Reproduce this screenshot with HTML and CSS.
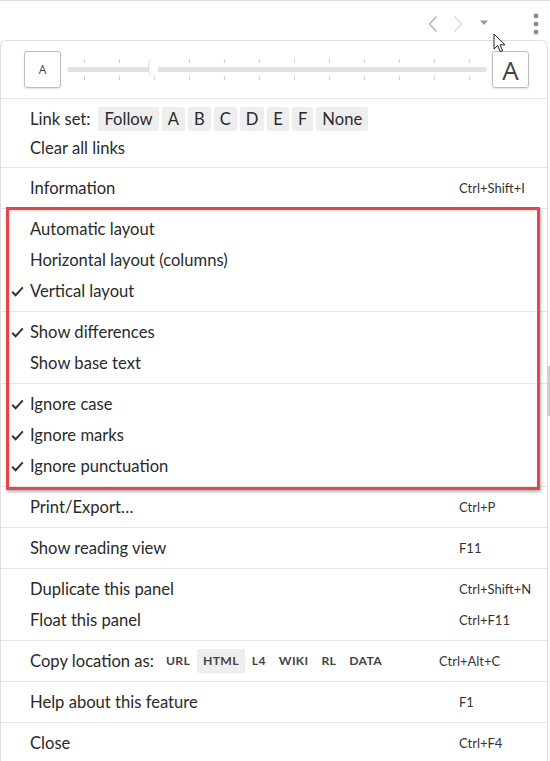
FILE: index.html
```html
<!DOCTYPE html>
<html lang="en">
<head>
<meta charset="utf-8">
<title>Menu</title>
<link rel="stylesheet" href="styles.css">
</head>
<body>
<div class="topbar">
  <span class="icon ic-prev"><svg width="12" height="18" viewBox="0 0 12 18"><path d="M9.5 1.5 L2.5 9 L9.5 16.5" fill="none" stroke="#b9b9b9" stroke-width="1.6"/></svg></span>
  <span class="icon ic-next"><svg width="12" height="18" viewBox="0 0 12 18"><path d="M2.5 1.5 L9.5 9 L2.5 16.5" fill="none" stroke="#dcdcdc" stroke-width="1.6"/></svg></span>
  <span class="icon ic-caret"><svg width="10" height="6" viewBox="0 0 10 6"><path d="M1 0.5 H9 L5 5 Z" fill="#9a9a9a"/></svg></span>
  <span class="icon ic-kebab"><svg width="6" height="22" viewBox="0 0 6 22"><circle cx="3" cy="3" r="2.4" fill="#8a8a8a"/><circle cx="3" cy="11" r="2.4" fill="#8a8a8a"/><circle cx="3" cy="19" r="2.4" fill="#8a8a8a"/></svg></span>
</div>

<div class="menu">
  <div class="slider-sec">
    <div class="abox abox-sm">A</div>
    <div class="slider">
      <div class="ticks"></div>
      <div class="track"></div>
      <div class="ticks"></div>
      <span class="thumb"></span>
    </div>
    <div class="abox abox-lg">A</div>
  </div>

  <div class="group">
    <div class="linkrow">
      <span class="lbl">Link set:</span>
      <span class="lbtn">Follow</span><span class="lbtn">A</span><span class="lbtn">B</span><span class="lbtn">C</span><span class="lbtn">D</span><span class="lbtn">E</span><span class="lbtn">F</span><span class="lbtn">None</span>
    </div>
    <div class="item item-clear"><span></span><span>Clear all links</span><span></span></div>
  </div>

  <div class="group">
    <div class="item"><span></span><span>Information</span><span class="sc">Ctrl+Shift+I</span></div>
  </div>

  <div class="group">
    <div class="item"><span></span><span>Automatic layout</span><span></span></div>
    <div class="item"><span></span><span>Horizontal layout (columns)</span><span></span></div>
    <div class="item"><span class="chk"><svg width="13" height="11" viewBox="0 0 13 11"><path d="M1.2 5.8 L4.6 9.2 L11.8 1.4" fill="none" stroke="#333" stroke-width="2"/></svg></span><span>Vertical layout</span><span></span></div>
  </div>

  <div class="group">
    <div class="item"><span class="chk"><svg width="13" height="11" viewBox="0 0 13 11"><path d="M1.2 5.8 L4.6 9.2 L11.8 1.4" fill="none" stroke="#333" stroke-width="2"/></svg></span><span>Show differences</span><span></span></div>
    <div class="item"><span></span><span>Show base text</span><span></span></div>
  </div>

  <div class="group">
    <div class="item"><span class="chk"><svg width="13" height="11" viewBox="0 0 13 11"><path d="M1.2 5.8 L4.6 9.2 L11.8 1.4" fill="none" stroke="#333" stroke-width="2"/></svg></span><span>Ignore case</span><span></span></div>
    <div class="item"><span class="chk"><svg width="13" height="11" viewBox="0 0 13 11"><path d="M1.2 5.8 L4.6 9.2 L11.8 1.4" fill="none" stroke="#333" stroke-width="2"/></svg></span><span>Ignore marks</span><span></span></div>
    <div class="item"><span class="chk"><svg width="13" height="11" viewBox="0 0 13 11"><path d="M1.2 5.8 L4.6 9.2 L11.8 1.4" fill="none" stroke="#333" stroke-width="2"/></svg></span><span>Ignore punctuation</span><span></span></div>
  </div>

  <div class="group">
    <div class="item"><span></span><span>Print/Export…</span><span class="sc">Ctrl+P</span></div>
  </div>

  <div class="group">
    <div class="item"><span></span><span>Show reading view</span><span class="sc">F11</span></div>
  </div>

  <div class="group">
    <div class="item"><span></span><span>Duplicate this panel</span><span class="sc">Ctrl+Shift+N</span></div>
    <div class="item"><span></span><span>Float this panel</span><span class="sc">Ctrl+F11</span></div>
  </div>

  <div class="group">
    <div class="item"><span></span><span class="copy"><span class="clbl">Copy location as:</span><span class="cbtn">URL</span><span class="cbtn on">HTML</span><span class="cbtn">L4</span><span class="cbtn">WIKI</span><span class="cbtn">RL</span><span class="cbtn">DATA</span></span><span class="sc sc-copy">Ctrl+Alt+C</span></div>
  </div>

  <div class="group">
    <div class="item"><span></span><span>Help about this feature</span><span class="sc">F1</span></div>
  </div>

  <div class="group">
    <div class="item"><span></span><span>Close</span><span class="sc">Ctrl+F4</span></div>
  </div>
</div>

<div class="highlight"></div>
<span class="scroll-thumb"></span>
<svg class="cursor" width="14" height="21" viewBox="0 0 14 21"><path d="M1 1 L1 16 L4.6 12.6 L7.2 18.6 L9.6 17.6 L7 11.8 L12 11.8 Z" fill="#fff" stroke="#222" stroke-width="1" stroke-linejoin="round"/></svg>
</body>
</html>
```

FILE: styles.css
```css
* { box-sizing: border-box; }

html, body {
  margin: 0;
  padding: 0;
  background: #fff;
}

body {
  position: relative;
  width: 550px;
  height: 761px;
  overflow: hidden;
  font-family: "Lato", "Open Sans", sans-serif;
  font-size: 16.6px;
  color: #2a2a2a;
}

.topbar {
  height: 40px;
  border-top: 1px solid #dcdcdc;
  padding-top: 7px;
  display: flex;
  align-items: center;
  justify-content: flex-end;
  padding-right: 4px;
}

.icon {
  display: flex;
  align-items: center;
  justify-content: center;
  width: 20px;
  height: 32px;
}

.ic-next { margin-left: 5px; }
.ic-caret { margin-left: 6px; }
.ic-caret svg { margin-top: -2px; }
.ic-kebab { margin-left: 32px; }

.menu {
  width: 548px;
  border: 1px solid #dedede;
  border-bottom: none;
  border-radius: 6px 6px 0 0;
}

.slider-sec {
  height: 57px;
  display: flex;
  align-items: center;
  padding: 0 18px 0 23px;
}

.abox {
  border: 1px solid #bdbdbd;
  border-radius: 3px;
  box-shadow: 0 1px 2px rgba(0, 0, 0, 0.12);
  display: flex;
  align-items: center;
  justify-content: center;
  color: #444;
  font-family: "Open Sans", sans-serif;
  flex: none;
}

.abox-sm {
  width: 37px;
  height: 37px;
  font-size: 12px;
}

.abox-lg {
  width: 37px;
  height: 37px;
  font-size: 26px;
  line-height: 1;
}

.slider {
  position: relative;
  flex: 1;
  margin: 0 5px 0 6px;
  display: flex;
  flex-direction: column;
  gap: 4px;
}

.ticks {
  height: 4px;
  background-image: linear-gradient(to right, transparent calc(50% - 0.5px), #cfcfcf calc(50% - 0.5px), #cfcfcf calc(50% + 0.5px), transparent calc(50% + 0.5px));
  background-size: calc(100% / 12) 100%;
  background-repeat: repeat-x;
}

.track {
  height: 5px;
  border-radius: 3px;
  background: #e2e2e2;
}

.thumb {
  position: absolute;
  left: 81px;
  top: -1px;
  width: 10px;
  height: 19px;
  border-radius: 50%;
  background: #fff;
  border-left: 1.5px solid #d6d6d6;
}

.group {
  border-top: 1px solid #e6e6e6;
  padding: 4.5px 0;
}

.linkrow {
  height: 29px;
  display: flex;
  align-items: center;
  padding-left: 29px;
  padding-top: 2px;
  gap: 3px;
}

.lbl { margin-right: 5px; }

.lbtn {
  background: #eeeeee;
  border-radius: 2px;
  height: 24px;
  line-height: 24px;
  padding: 0 6px;
}

.item {
  display: grid;
  grid-template-columns: 29px 1fr 88px;
  align-items: center;
  height: 31px;
}

.item-clear { height: 30px; }

.chk {
  display: flex;
  align-items: center;
  padding-left: 10px;
}

.sc {
  font-size: 13px;
  color: #333;
}

.sc-copy { margin-left: -20px; }

.copy {
  display: flex;
  align-items: center;
}

.clbl { margin-right: 6px; }

.cbtn {
  font-size: 12.2px;
  font-weight: 700;
  letter-spacing: 0.3px;
  color: #444;
  height: 24px;
  line-height: 24px;
  padding: 0 6px;
  margin-right: 1px;
  border-radius: 2px;
}

.cbtn.on { background: #eeeeee; }

.highlight {
  position: absolute;
  left: 6px;
  top: 207px;
  width: 534px;
  height: 283px;
  border: 3px solid #e2474b;
  box-shadow: 1px 2px 3px rgba(0, 0, 0, 0.3), inset 1px 1px 2px rgba(0, 0, 0, 0.15);
}

.scroll-thumb {
  position: absolute;
  left: 547px;
  top: 366px;
  width: 3px;
  height: 50px;
  background: #d0d0d0;
}

.cursor {
  position: absolute;
  left: 493px;
  top: 33px;
}
```
